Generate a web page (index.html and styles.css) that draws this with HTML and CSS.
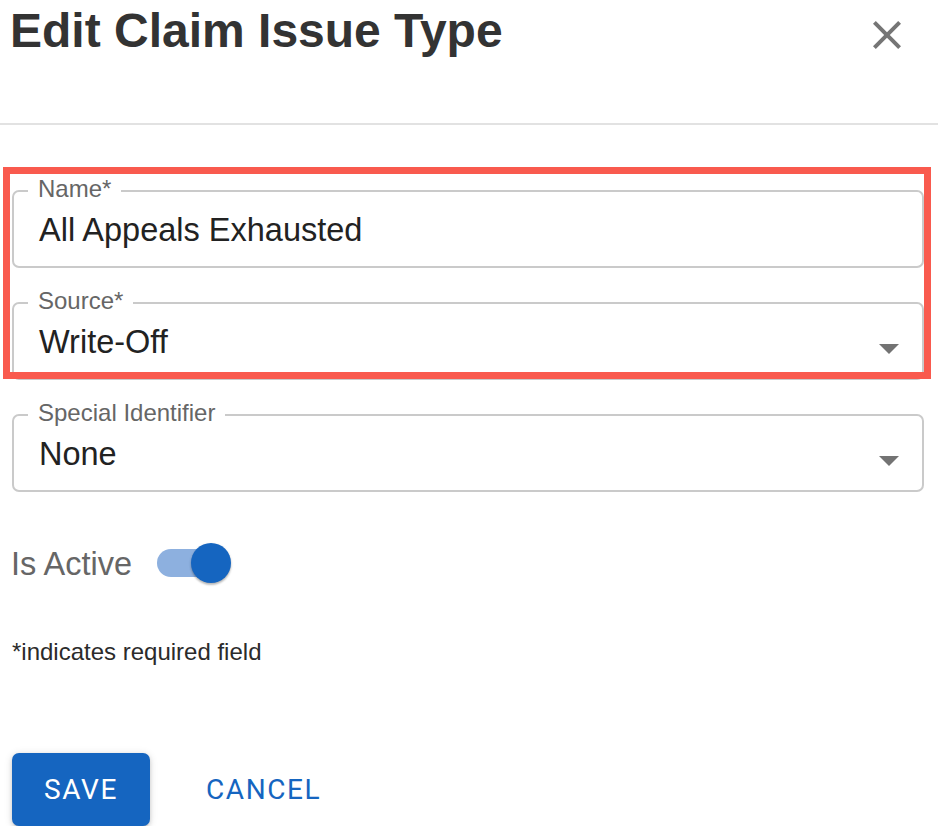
FILE: index.html
```html
<!DOCTYPE html>
<html lang="en">
<head>
<meta charset="utf-8">
<title>Edit Claim Issue Type</title>
<link rel="stylesheet" href="styles.css">
</head>
<body>
<div class="dialog">
  <header class="header">
    <h1 class="title">Edit Claim Issue Type</h1>
    <button class="close" aria-label="Close">
      <svg viewBox="0 0 24 24" width="48" height="48"><path d="M19 6.41 17.59 5 12 10.59 6.41 5 5 6.41 10.59 12 5 17.59 6.41 19 12 13.41 17.59 19 19 17.59 13.41 12z" fill="currentColor"/></svg>
    </button>
  </header>
  <div class="divider"></div>
  <div class="content">
    <fieldset class="field field-first">
      <legend>Name*</legend>
      <div class="value">All Appeals Exhausted</div>
    </fieldset>
    <fieldset class="field">
      <legend>Source*</legend>
      <div class="value">Write-Off
        <svg class="arrow" viewBox="0 0 24 24" width="48" height="48"><path d="M7 10l5 5 5-5z" fill="currentColor"/></svg>
      </div>
    </fieldset>
    <fieldset class="field">
      <legend>Special Identifier</legend>
      <div class="value">None
        <svg class="arrow" viewBox="0 0 24 24" width="48" height="48"><path d="M7 10l5 5 5-5z" fill="currentColor"/></svg>
      </div>
    </fieldset>
    <div class="active-row">
      <span class="active-label">Is Active</span>
      <span class="switch"><span class="track"></span><span class="thumb"></span></span>
    </div>
    <p class="required">*indicates required field</p>
    <div class="actions">
      <button class="btn btn-save">SAVE</button>
      <button class="btn btn-cancel">CANCEL</button>
    </div>
    <div class="highlight"></div>
  </div>
</div>
</body>
</html>
```
FILE: styles.css
```css
html, body {
  margin: 0;
  padding: 0;
  background: #ffffff;
}
body {
  font-family: "Liberation Sans", Arial, Helvetica, sans-serif;
  color: #222222;
}
.dialog {
  width: 938px;
}
.header {
  display: flex;
  justify-content: space-between;
  align-items: flex-start;
  height: 123px;
  box-sizing: border-box;
  padding: 3px 27px 0 10px;
}
.title {
  margin: 0;
  font-size: 48px;
  line-height: 56px;
  font-weight: 700;
  color: #333333;
}
.close {
  margin-top: 8px;
  padding: 0;
  border: 0;
  background: none;
  width: 48px;
  height: 48px;
  color: #757575;
  display: flex;
}
.divider {
  height: 2px;
  background: #e2e2e2;
}
.content {
  position: relative;
  padding: 52px 14px 0 12px;
}
.field {
  margin: 21px 0 0 0;
  padding: 0;
  min-width: 0;
  border: 2px solid #cacaca;
  border-radius: 7px;
}
.field-first {
  margin-top: 0;
}
.field legend {
  margin-left: 14px;
  padding: 0 10px 4px 10px;
  font-size: 24px;
  line-height: 24px;
  color: #666666;
}
.value {
  display: flex;
  align-items: center;
  justify-content: space-between;
  height: 61px;
  box-sizing: border-box;
  padding: 0 9px 10px 25px;
  font-size: 32.5px;
  line-height: 51px;
  color: #222222;
}
.arrow {
  color: #737373;
  margin-top: 10px;
}
.active-row {
  display: flex;
  align-items: center;
  margin-top: 51px;
  height: 40px;
}
.active-label {
  font-size: 32.5px;
  line-height: 40px;
  color: #666666;
  margin-left: -1px;
  padding-top: 2px;
}
.switch {
  display: flex;
  align-items: center;
  margin-left: 25px;
}
.track {
  width: 68px;
  height: 28px;
  border-radius: 14px;
  background: #8db0df;
}
.thumb {
  width: 40px;
  height: 40px;
  border-radius: 50%;
  background: #1565c0;
  margin-left: -34px;
  box-shadow: 0 2px 2px rgba(0,0,0,0.2), 0 1px 3px rgba(0,0,0,0.14);
}
.required {
  margin: 55px 0 0 0;
  font-size: 24px;
  line-height: 28px;
  color: #2b2b2b;
}
.actions {
  display: flex;
  align-items: center;
  margin-top: 87px;
}
.btn {
  font-family: Roboto, "Liberation Sans", sans-serif;
  font-size: 28px;
  font-weight: 400;
  letter-spacing: 1.6px;
  border: 0;
  cursor: pointer;
}
.btn-save {
  width: 138px;
  height: 73px;
  border-radius: 7px;
  background: #1565c0;
  color: #ffffff;
  box-shadow: 0 3px 2px -2px rgba(0,0,0,0.2), 0 2px 4px rgba(0,0,0,0.14), 0 1px 8px rgba(0,0,0,0.12);
}
.btn-cancel {
  margin-left: 40px;
  padding: 0 16px;
  height: 73px;
  background: none;
  color: #1565c0;
}
.highlight {
  position: absolute;
  left: 3px;
  top: 42px;
  width: 928px;
  height: 212px;
  box-sizing: border-box;
  border: 7px solid #f95a4e;
  pointer-events: none;
}
```
